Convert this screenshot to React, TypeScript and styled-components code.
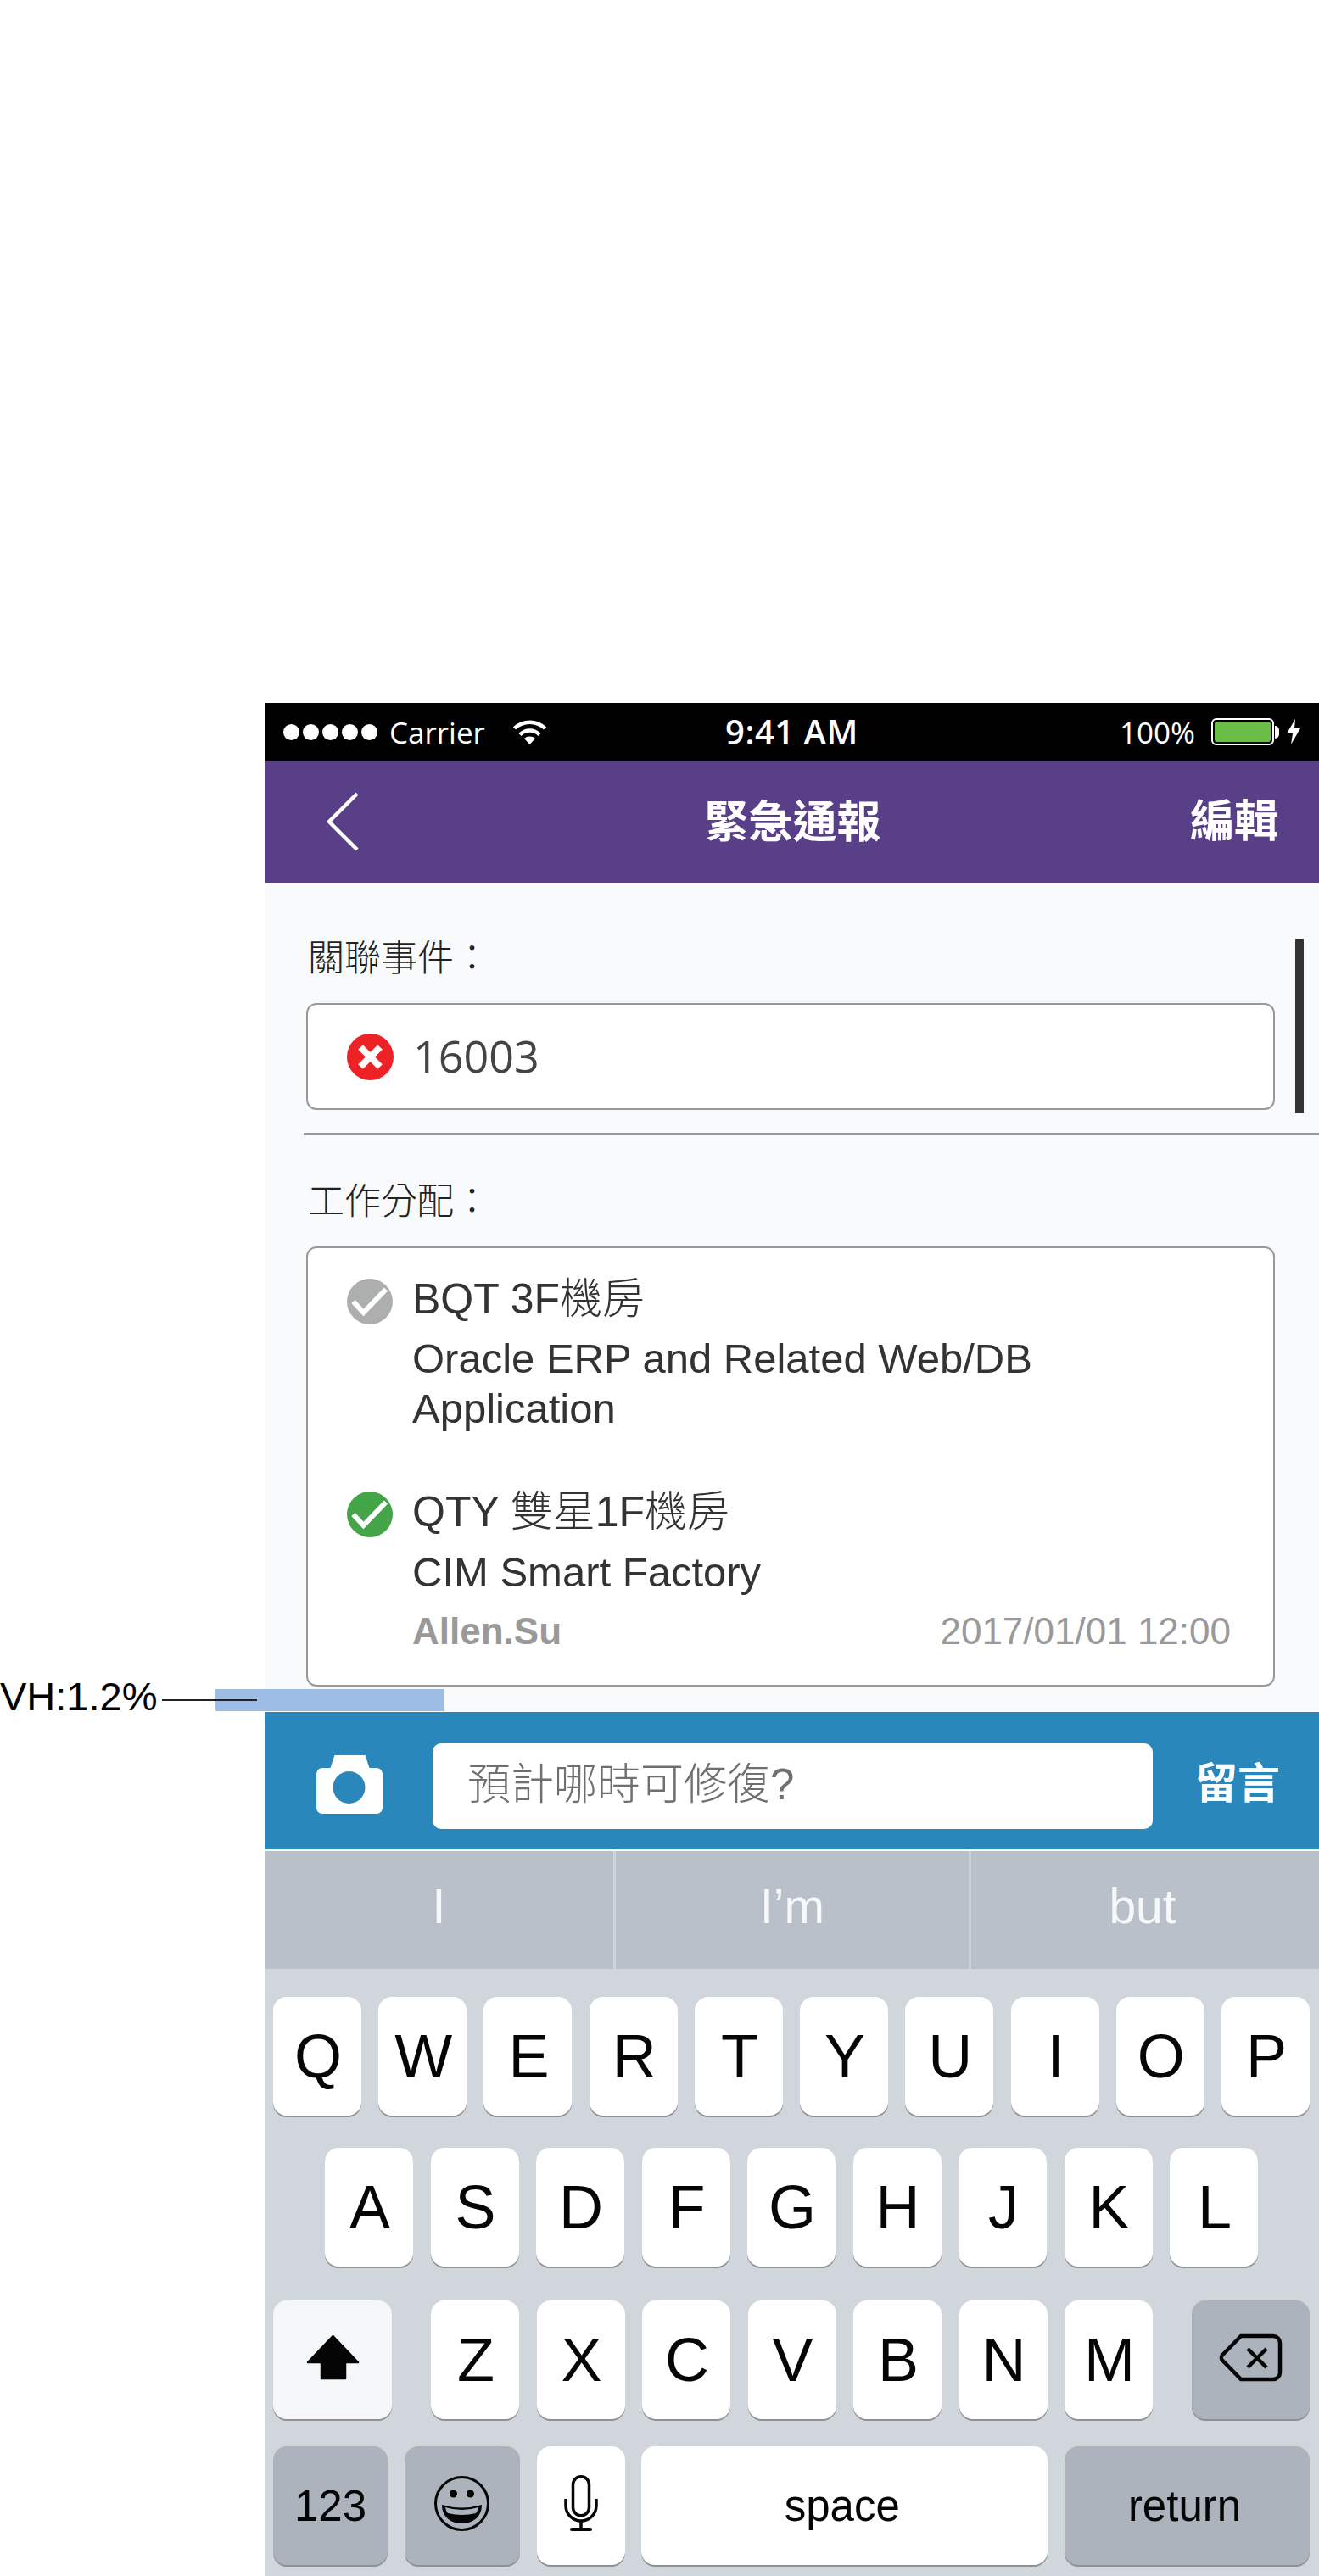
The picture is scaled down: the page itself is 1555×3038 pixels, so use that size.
import React from "react";
import styled, { createGlobalStyle } from "styled-components";

const SANS = `"Liberation Sans", "Noto Sans CJK TC", sans-serif`;
const OPEN = `"Open Sans", "Noto Sans CJK TC", sans-serif`;

const GlobalStyle = createGlobalStyle`
  html, body {
    margin: 0;
    padding: 0;
    background: #fff;
  }
  * {
    box-sizing: border-box;
  }
`;

const Page = styled.div`
  position: relative;
  width: 1555px;
  height: 3038px;
  padding: 829px 0 0 312px;
  overflow: hidden;
  background: #fff;
  font-family: ${SANS};
`;

const Phone = styled.div`
  width: 1243px;
  display: flex;
  flex-direction: column;
`;

/* status bar */
const StatusBar = styled.div`
  height: 68px;
  background: #000;
  color: #fff;
  display: grid;
  grid-template-columns: 1fr auto 1fr;
  align-items: center;
  padding: 0 22px;
  font-family: ${OPEN};
`;

const StatusLeft = styled.div`
  display: flex;
  align-items: center;
`;

const Dots = styled.div`
  display: flex;
  gap: 4px;
  margin-right: 14px;
`;

const Dot = styled.span`
  width: 19px;
  height: 19px;
  border-radius: 50%;
  background: #fff;
`;

const Carrier = styled.span`
  font-size: 35px;
  font-weight: 400;
  line-height: 1;
  margin-right: 33px;
`;

const Clock = styled.span`
  font-size: 40px;
  font-weight: 600;
  line-height: 1;
  letter-spacing: 0.5px;
`;

const StatusRight = styled.div`
  display: flex;
  align-items: center;
  justify-content: flex-end;
`;

const Percent = styled.span`
  font-size: 35px;
  font-weight: 400;
  line-height: 1;
  margin-right: 19px;
`;

const Battery = styled.div`
  width: 74px;
  height: 32px;
  border: 2px solid #fff;
  border-radius: 6px;
  padding: 2px;
  margin-right: 1px;
  &::before {
    content: "";
    display: block;
    height: 100%;
    border-radius: 3px;
    background: #6abd45;
  }
`;

const BatteryNub = styled.span`
  width: 5px;
  height: 15px;
  background: #fff;
  border-radius: 0 8px 8px 0;
  margin-right: 9px;
`;

/* nav */
const NavBar = styled.div`
  height: 144px;
  background: #583f87;
  color: #fff;
  display: grid;
  grid-template-columns: 1fr auto 1fr;
  align-items: center;
  padding: 0 48px 0 72px;
`;

const NavTitle = styled.div`
  margin: 2px 22px 0 0;
  font-size: 52px;
  font-weight: 700;
  line-height: 1;
`;

const NavAction = styled.div`
  justify-self: end;
  font-size: 52px;
  font-weight: 700;
  line-height: 1;
`;

/* content */
const Content = styled.div`
  position: relative;
  height: 978px;
  background: #f9fafc;
  padding: 56px 0 0 49px;
`;

const ScrollThumb = styled.div`
  position: absolute;
  top: 66px;
  right: 18px;
  width: 10px;
  height: 206px;
  background: #333;
`;

const FieldLabel = styled.div<{ $top?: number }>`
  margin-top: ${({ $top }) => $top ?? 0}px;
  padding-left: 2px;
  height: 60px;
  line-height: 67px;
  font-size: 43px;
  font-weight: 300;
  color: #222;
`;

const Box = styled.div`
  width: 1142px;
  margin-top: 26px;
  background: #fff;
  border: 2px solid #999;
  border-radius: 12px;
`;

const SingleBox = styled(Box)`
  height: 126px;
  padding-left: 46px;
  display: flex;
  align-items: center;
  gap: 23px;
`;

const EventNo = styled.span`
  margin-top: -2px;
  font-family: ${OPEN};
  font-size: 52px;
  font-weight: 400;
  line-height: 1;
  color: #444;
`;

const Divider = styled.div`
  height: 2px;
  margin: 27px 0 0 -3px;
  background: #999;
`;

const ListBox = styled(Box)`
  height: 519px;
  padding: 36px 50px 0 46px;
`;

const Item = styled.div<{ $top?: number }>`
  display: grid;
  grid-template-columns: 54px 1fr;
  column-gap: 23px;
  margin-top: ${({ $top }) => $top ?? 0}px;
`;

const ItemIcon = styled.svg`
  display: block;
  width: 54px;
  height: 54px;
`;

const ItemTitle = styled.div`
  margin-top: -6px;
  font-size: 50px;
  font-weight: 300;
  line-height: 60px;
  color: #333;
  white-space: nowrap;
`;

const ItemText = styled.div<{ $top: number }>`
  font-size: 49px;
  line-height: 59px;
  margin-top: ${({ $top }) => $top}px;
  color: #333;
  white-space: nowrap;
`;

const ItemFoot = styled.div`
  display: flex;
  justify-content: space-between;
  align-items: baseline;
  margin-top: 15px;
  color: #999;
`;

const Author = styled.span`
  font-size: 44px;
  font-weight: 700;
`;

const Stamp = styled.span`
  font-size: 44px;
`;

/* comment bar */
const CommentBar = styled.div`
  height: 162px;
  background: #2a87bb;
  display: flex;
  align-items: center;
  padding-left: 61px;
`;

const CameraIcon = styled.svg`
  width: 78px;
  height: 69px;
  margin: 9px 59px 0 0;
`;

const CommentInput = styled.div`
  width: 849px;
  height: 101px;
  margin-top: 12px;
  padding: 0 0 12px 41px;
  background: #fff;
  border-radius: 10px;
  display: flex;
  align-items: center;
  font-size: 51px;
  font-weight: 300;
  color: #6f6f6f;
`;

const CommentSend = styled.div`
  margin: 8px 0 0 50px;
  font-size: 50px;
  font-weight: 700;
  line-height: 1;
  color: #fff;
`;

/* keyboard */
const Suggestions = styled.div`
  margin-top: 2px;
  height: 139px;
  background: #b9c0c9;
  display: grid;
  grid-template-columns: 411px 419px 1fr;
`;

const Suggestion = styled.div`
  display: flex;
  align-items: center;
  justify-content: center;
  padding-bottom: 10px;
  font-size: 57px;
  color: #f7f8f9;
  & + & {
    border-left: 3px solid #cfd3da;
  }
  &:last-child {
    padding-right: 6px;
  }
`;

const Keyboard = styled.div`
  height: 716px;
  background: #d1d5dc;
  padding-top: 33px;
`;

const KeyRow = styled.div<{ $top?: number; $inset?: number }>`
  display: flex;
  justify-content: space-between;
  margin-top: ${({ $top }) => $top ?? 0}px;
  padding: 0 ${({ $inset }) => ($inset ?? 10) + 1}px 0 ${({ $inset }) => $inset ?? 10}px;
`;

const KeyGroup = styled.div`
  display: flex;
  gap: 20.5px;
`;

const TONES = {
  plain: "#fff",
  light: "#f5f6f8",
  dark: "#adb3bd",
};

const Key = styled.div<{ $w?: number; $tone?: keyof typeof TONES }>`
  width: ${({ $w }) => $w ?? 104}px;
  height: 140px;
  flex: none;
  display: flex;
  align-items: center;
  justify-content: center;
  padding-left: 2px;
  background: ${({ $tone }) => TONES[$tone ?? "plain"]};
  border-radius: 16px;
  box-shadow: 0 2px 0 #8e9094;
  font-size: 72px;
  line-height: 1;
  color: #050505;
`;

const NumberKey = styled(Key)`
  padding: 0;
  font-size: 51px;
`;

const WordKey = styled(NumberKey)`
  padding-right: 6px;
`;

const KeyIcon = styled.svg`
  display: block;
  overflow: visible;
  margin: -6px 2px 0 0;
`;

/* annotation over the page */
const Highlight = styled.div`
  position: absolute;
  left: 254px;
  top: 1992px;
  width: 270px;
  height: 26px;
  background: #9dbde4;
`;

const Leader = styled.div`
  position: absolute;
  left: 191px;
  top: 2004px;
  width: 112px;
  height: 2px;
  background: #222;
`;

const Measure = styled.div`
  position: absolute;
  left: 0;
  top: 1975px;
  font-size: 47px;
  line-height: 52px;
  color: #000;
`;

const StatusDot = ({ color }: { color: string }) => (
  <ItemIcon viewBox="0 0 54 54">
    <circle cx="27" cy="27" r="27" fill={color} />
    <polyline points="7.5,27 19.5,40 46,12.5" fill="none" stroke="#fff" strokeWidth="6" />
  </ItemIcon>
);

const ROW_1 = ["Q", "W", "E", "R", "T", "Y", "U", "I", "O", "P"];
const ROW_2 = ["A", "S", "D", "F", "G", "H", "J", "K", "L"];
const ROW_3 = ["Z", "X", "C", "V", "B", "N", "M"];

export default function App() {
  return (
    <Page>
      <GlobalStyle />
      <Phone>
        <StatusBar>
          <StatusLeft>
            <Dots>
              {[0, 1, 2, 3, 4].map((i) => (
                <Dot key={i} />
              ))}
            </Dots>
            <Carrier>Carrier</Carrier>
            <svg width="39" height="30" viewBox="0 0 39 30" fill="none" stroke="#fff" strokeWidth="4.5">
              <path d="M1.5 11 A26 26 0 0 1 37.5 11" />
              <path d="M8 18.5 A16 16 0 0 1 31 18.5" />
              <path d="M19.5 30 L13 23 A10 10 0 0 1 26 23 Z" fill="#fff" stroke="none" />
            </svg>
          </StatusLeft>
          <Clock>9:41 AM</Clock>
          <StatusRight>
            <Percent>100%</Percent>
            <Battery />
            <BatteryNub />
            <svg width="16" height="30" viewBox="0 0 16 30">
              <path d="M10 0 L0 17 H7 L5 30 L16 11 H9 Z" fill="#fff" />
            </svg>
          </StatusRight>
        </StatusBar>

        <NavBar>
          <svg width="40" height="72" viewBox="0 0 40 72" fill="none" stroke="#fff" strokeWidth="4.5">
            <polyline points="37,3 4,36 37,69" />
          </svg>
          <NavTitle>緊急通報</NavTitle>
          <NavAction>編輯</NavAction>
        </NavBar>

        <Content>
          <ScrollThumb />
          <FieldLabel>關聯事件：</FieldLabel>
          <SingleBox>
            <svg width="55" height="55" viewBox="0 0 55 55">
              <circle cx="27.5" cy="27.5" r="27.5" fill="#ed2227" />
              <path d="M16 16 L39 39 M39 16 L16 39" stroke="#fff" strokeWidth="8" />
            </svg>
            <EventNo>16003</EventNo>
          </SingleBox>
          <Divider />
          <FieldLabel $top={46}>工作分配：</FieldLabel>
          <ListBox>
            <Item>
              <StatusDot color="#adafae" />
              <div>
                <ItemTitle>BQT 3F機房</ItemTitle>
                <ItemText $top={11}>
                  Oracle ERP and Related Web/DB
                  <br />
                  Application
                </ItemText>
              </div>
            </Item>
            <Item $top={68}>
              <StatusDot color="#43a548" />
              <div>
                <ItemTitle>QTY 雙星1F機房</ItemTitle>
                <ItemText $top={12}>CIM Smart Factory</ItemText>
                <ItemFoot>
                  <Author>Allen.Su</Author>
                  <Stamp>2017/01/01 12:00</Stamp>
                </ItemFoot>
              </div>
            </Item>
          </ListBox>
        </Content>

        <CommentBar>
          <CameraIcon viewBox="0 0 78 69">
            <path
              d="M7 15 H16.5 L21.5 0 H57.5 L62.5 15 H71 A7 7 0 0 1 78 22 V62 A7 7 0 0 1 71 69 H7 A7 7 0 0 1 0 62 V22 A7 7 0 0 1 7 15 Z"
              fill="#fff"
            />
            <circle cx="38.5" cy="38" r="19" fill="#2a87bb" />
          </CameraIcon>
          <CommentInput>預計哪時可修復?</CommentInput>
          <CommentSend>留言</CommentSend>
        </CommentBar>

        <Suggestions>
          <Suggestion>I</Suggestion>
          <Suggestion>I’m</Suggestion>
          <Suggestion>but</Suggestion>
        </Suggestions>

        <Keyboard>
          <KeyRow>
            {ROW_1.map((k) => (
              <Key key={k}>{k}</Key>
            ))}
          </KeyRow>
          <KeyRow $top={38} $inset={71}>
            {ROW_2.map((k) => (
              <Key key={k}>{k}</Key>
            ))}
          </KeyRow>
          <KeyRow $top={40}>
            <Key $w={140} $tone="light">
              <KeyIcon width="63" height="54" viewBox="0 0 63 54">
                <path
                  d="M31.5 2 L61 33 H46 V52 H18 V33 H2 Z"
                  fill="#050505"
                  stroke="#050505"
                  strokeWidth="2.5"
                  strokeLinejoin="round"
                />
              </KeyIcon>
            </Key>
            <KeyGroup>
              {ROW_3.map((k) => (
                <Key key={k}>{k}</Key>
              ))}
            </KeyGroup>
            <Key $w={139} $tone="dark">
              <KeyIcon width="75" height="57" viewBox="0 0 75 57" fill="none" stroke="#050505" strokeWidth="4.5">
                <path d="M26 3 H64 A8 8 0 0 1 72 11 V46 A8 8 0 0 1 64 54 H26 L4 31.5 A4.5 4.5 0 0 1 4 25.5 Z" />
                <path d="M34 18 L56 40 M56 18 L34 40" />
              </KeyIcon>
            </Key>
          </KeyRow>
          <KeyRow $top={32}>
            <NumberKey $w={135} $tone="dark">
              123
            </NumberKey>
            <Key $w={136} $tone="dark">
              <KeyIcon width="65" height="65" viewBox="0 0 65 65">
                <ellipse cx="32.5" cy="32.5" rx="31" ry="31" fill="none" stroke="#050505" strokeWidth="3" />
                <circle cx="22.5" cy="21" r="4.5" fill="#050505" />
                <circle cx="42.5" cy="21" r="4.5" fill="#050505" />
                <path d="M9 34 Q32.5 41 56 34 C56 48 46 56 32.5 56 C19 56 9 48 9 34 Z" fill="#050505" />
                <path d="M13 37 Q32.5 43 52 37 C51 41 50 43 49 44 Q32.5 48 16 44 C15 43 14 41 13 37 Z" fill="#adb3bd" />
              </KeyIcon>
            </Key>
            <Key>
              <KeyIcon width="40" height="66" viewBox="0 0 40 66" fill="none" stroke="#050505" strokeWidth="3.5">
                <rect x="10.5" y="1.75" width="19" height="46" rx="9.5" />
                <path d="M2 28 V36 A18 18 0 0 0 38 36 V28" />
                <path d="M20 54 V63" />
                <path d="M9 64 H31" strokeWidth="4" strokeLinecap="round" />
              </KeyIcon>
            </Key>
            <WordKey $w={479}>space</WordKey>
            <WordKey $w={289} $tone="dark">
              return
            </WordKey>
          </KeyRow>
        </Keyboard>
      </Phone>

      <Highlight />
      <Leader />
      <Measure>VH:1.2%</Measure>
    </Page>
  );
}
